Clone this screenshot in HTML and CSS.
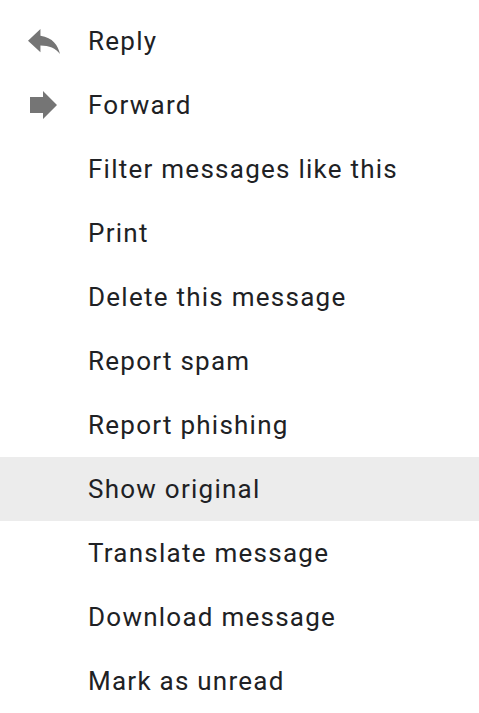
FILE: index.html
```html
<html>
    <head>
        <title>menu</title>
        <link rel="stylesheet" href="styles.css">
    </head>
    <body>
        <ul class="menu">
            <li class="item">
                <span class="icono">
                    <svg class="reply" viewBox="3 5 18 15" width="32" height="25" preserveAspectRatio="none">
                        <path d="M10 9V5l-7 7 7 7v-4.1c5 0 8.5 1.6 11 5.1-1-5-4-10-11-11z" fill="#757575"/>
                    </svg>
                </span>
                <span class="texto">Reply</span>
            </li>
            <li class="item">
                <span class="icono">
                    <svg class="forward" viewBox="0 0 28 28" width="28" height="28">
                        <polygon points="0,6 13,6 13,0 27,14 13,28 13,22 0,22" fill="#757575"/>
                    </svg>
                </span>
                <span class="texto">Forward</span>
            </li>
            <li class="item"><span class="icono"></span><span class="texto">Filter messages like this</span></li>
            <li class="item"><span class="icono"></span><span class="texto">Print</span></li>
            <li class="item"><span class="icono"></span><span class="texto">Delete this message</span></li>
            <li class="item"><span class="icono"></span><span class="texto">Report spam</span></li>
            <li class="item"><span class="icono"></span><span class="texto">Report phishing</span></li>
            <li class="item activo"><span class="icono"></span><span class="texto">Show original</span></li>
            <li class="item"><span class="icono"></span><span class="texto">Translate message</span></li>
            <li class="item"><span class="icono"></span><span class="texto">Download message</span></li>
            <li class="item"><span class="icono"></span><span class="texto">Mark as unread</span></li>
        </ul>
    </body>
</html>
```
FILE: styles.css
```css
html{
    background-color: #ffffff;
}
    body{
        margin: 0;
        font-family: Roboto, "Liberation Sans", sans-serif;
        color: #202124;
    }
    .menu{
        list-style: none;
        margin: 0;
        padding: 9px 0 0 0;
    }
    .item{
        display: flex;
        align-items: center;
        height: 64px;
        font-size: 26px;
        letter-spacing: 1.25px;
    }
    .activo{
        background-color: #ececec;
    }
    .icono{
        display: flex;
        align-items: center;
        width: 88px;
        height: 64px;
        flex-shrink: 0;
    }
    .reply{
        margin-left: 28px;
        margin-top: 1px;
    }
    .forward{
        margin-left: 30px;
    }
```
